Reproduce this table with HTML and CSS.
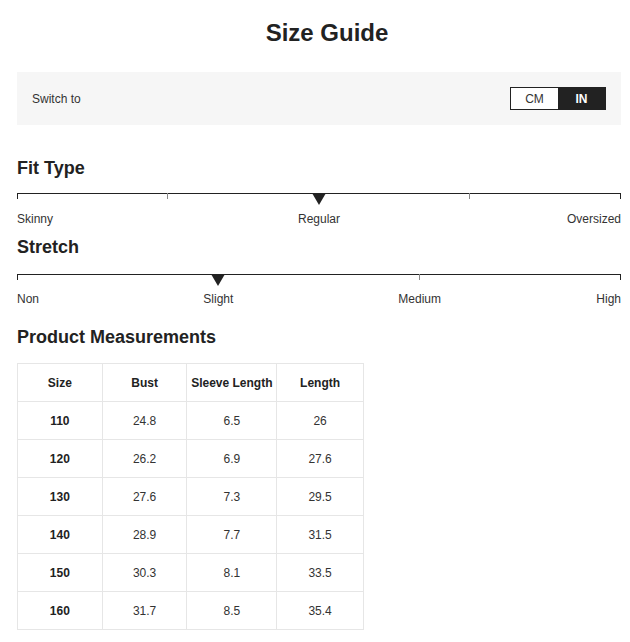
FILE: index.html
```html
<!DOCTYPE html>
<html>
<head>
<meta charset="utf-8">
<link rel="stylesheet" href="styles.css">
</head>
<body>
<div class="page">
  <h1 class="title">Size Guide</h1>
  <div class="switch-bar">
    <span class="switch-label">Switch to</span>
    <div class="toggle">
      <span class="opt">CM</span>
      <span class="opt active">IN</span>
    </div>
  </div>

  <h2 class="heading fit-heading">Fit Type</h2>
  <div class="scale fit-scale">
    <div class="track">
      <span class="tick end" style="left:0%"></span>
      <span class="tick" style="left:25%"></span>
      <span class="marker" style="left:50%"></span>
      <span class="tick" style="left:75%"></span>
      <span class="tick end" style="left:100%"></span>
    </div>
    <div class="labels">
      <span class="lab first" style="left:0%">Skinny</span>
      <span class="lab" style="left:50%">Regular</span>
      <span class="lab last" style="left:100%">Oversized</span>
    </div>
  </div>

  <h2 class="heading stretch-heading">Stretch</h2>
  <div class="scale">
    <div class="track">
      <span class="tick end" style="left:0%"></span>
      <span class="marker" style="left:33.333%"></span>
      <span class="tick" style="left:66.667%"></span>
      <span class="tick end" style="left:100%"></span>
    </div>
    <div class="labels">
      <span class="lab first" style="left:0%">Non</span>
      <span class="lab" style="left:33.333%">Slight</span>
      <span class="lab" style="left:66.667%">Medium</span>
      <span class="lab last" style="left:100%">High</span>
    </div>
  </div>

  <h2 class="heading pm-heading">Product Measurements</h2>
  <table class="measure">
    <thead>
      <tr><th>Size</th><th>Bust</th><th>Sleeve Length</th><th>Length</th></tr>
    </thead>
    <tbody>
      <tr><td class="sz">110</td><td>24.8</td><td>6.5</td><td>26</td></tr>
      <tr><td class="sz">120</td><td>26.2</td><td>6.9</td><td>27.6</td></tr>
      <tr><td class="sz">130</td><td>27.6</td><td>7.3</td><td>29.5</td></tr>
      <tr><td class="sz">140</td><td>28.9</td><td>7.7</td><td>31.5</td></tr>
      <tr><td class="sz">150</td><td>30.3</td><td>8.1</td><td>33.5</td></tr>
      <tr><td class="sz">160</td><td>31.7</td><td>8.5</td><td>35.4</td></tr>
    </tbody>
  </table>
</div>
</body>
</html>
```
FILE: styles.css
```css
* { box-sizing: border-box; }
html, body { margin: 0; padding: 0; background: #fff; }
body {
  font-family: "Liberation Sans", Arial, sans-serif;
  color: #222;
}
.page {
  padding: 0 9px 0 17px;
  width: 630px;
}
.title {
  margin: 0;
  padding-top: 19px;
  padding-left: 16px;
  height: 72px;
  text-align: center;
  font-size: 24px;
  font-weight: bold;
  line-height: 28px;
  color: #222;
}
.switch-bar {
  background: #f6f6f6;
  height: 53px;
  display: flex;
  align-items: center;
  justify-content: space-between;
  padding: 0 15px 0 15px;
}
.switch-label {
  font-size: 12px;
  color: #333;
}
.toggle {
  display: flex;
  border: 1px solid #222;
  height: 23px;
}
.opt {
  width: 47px;
  display: flex;
  align-items: center;
  justify-content: center;
  font-size: 12px;
  background: #fff;
  color: #333;
}
.opt.active {
  background: #222;
  color: #fff;
  font-weight: bold;
}
.heading {
  margin: 0;
  font-size: 18px;
  font-weight: bold;
  line-height: 20px;
  color: #222;
}
.fit-heading { margin-top: 33px; }
.stretch-heading { margin-top: 9px; }
.pm-heading { margin-top: 19px; }
.scale {
  margin-top: 15px;
}
.stretch-heading + .scale { margin-top: 17px; }
.track {
  position: relative;
  height: 1px;
  background: #222;
}
.tick {
  position: absolute;
  top: 0;
  width: 1px;
  height: 6px;
  background: #888;
  margin-left: -1px;
}
.tick.end { background: #222; }
.tick.end[style="left:0%"] { margin-left: 0; }
.marker {
  position: absolute;
  top: 0;
  width: 0;
  height: 0;
  margin-left: -7px;
  border-left: 7px solid transparent;
  border-right: 7px solid transparent;
  border-top: 12px solid #222;
}
.labels {
  position: relative;
  height: 16px;
  margin-top: 17px;
}
.fit-scale .labels { margin-top: 18px; }
.lab {
  position: absolute;
  top: 0;
  transform: translateX(-50%);
  font-size: 12px;
  line-height: 14px;
  color: #333;
  white-space: nowrap;
}
.lab.first { transform: none; }
.lab.last { transform: translateX(-100%); }
.measure {
  margin-top: 16px;
  border-collapse: collapse;
  width: 347px;
  font-size: 12px;
  color: #333;
}
.measure th, .measure td {
  border: 1px solid #e6e6e6;
  height: 38px;
  text-align: center;
  padding: 0;
}
.measure th {
  font-weight: bold;
  color: #222;
}
.measure th:nth-child(1), .measure td:nth-child(1) { width: 85px; }
.measure th:nth-child(2), .measure td:nth-child(2) { width: 85px; }
.measure th:nth-child(3), .measure td:nth-child(3) { width: 90px; }
.measure th:nth-child(4), .measure td:nth-child(4) { width: 87px; }
.measure td.sz { font-weight: bold; color: #222; }
```
